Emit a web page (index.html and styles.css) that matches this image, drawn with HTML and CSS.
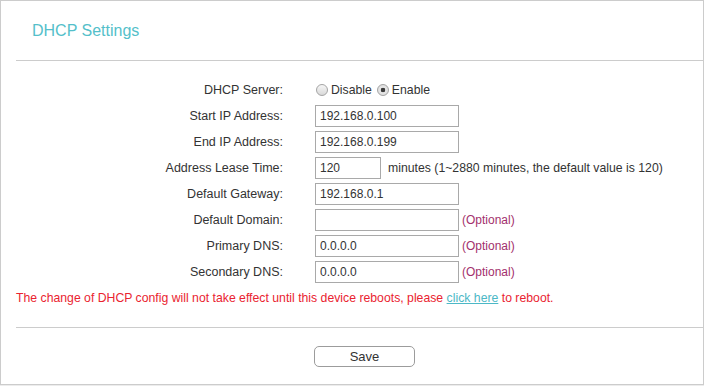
FILE: index.html
```html
<!DOCTYPE html>
<html>
<head>
<meta charset="utf-8">
<title>DHCP Settings</title>
<link rel="stylesheet" href="styles.css">
</head>
<body>
<div class="panel">
  <h2 class="title">DHCP Settings</h2>
  <hr class="rule">
  <div class="form">
    <label class="lbl">DHCP Server:</label>
    <div class="field">
      <label class="radio"><input type="radio" name="dhcp"><span>Disable</span></label>
      <label class="radio"><input type="radio" name="dhcp" checked><span>Enable</span></label>
    </div>
    <label class="lbl">Start IP Address:</label>
    <div class="field"><input class="txt" type="text" value="192.168.0.100"></div>
    <label class="lbl">End IP Address:</label>
    <div class="field"><input class="txt" type="text" value="192.168.0.199"></div>
    <label class="lbl">Address Lease Time:</label>
    <div class="field"><input class="txt short" type="text" value="120"><span class="hint">minutes (1~2880 minutes, the default value is 120)</span></div>
    <label class="lbl">Default Gateway:</label>
    <div class="field"><input class="txt" type="text" value="192.168.0.1"></div>
    <label class="lbl">Default Domain:</label>
    <div class="field"><input class="txt" type="text" value=""><span class="opt">(Optional)</span></div>
    <label class="lbl">Primary DNS:</label>
    <div class="field"><input class="txt" type="text" value="0.0.0.0"><span class="opt">(Optional)</span></div>
    <label class="lbl">Secondary DNS:</label>
    <div class="field"><input class="txt" type="text" value="0.0.0.0"><span class="opt">(Optional)</span></div>
  </div>
  <p class="note">The change of DHCP config will not take effect until this device reboots, please <a href="#" class="link">click here</a> to reboot.</p>
  <hr class="rule rule-bottom">
  <div class="actions"><button class="btn" type="button">Save</button></div>
</div>
</body>
</html>
```
FILE: styles.css
```css
html, body {
  margin: 0;
  padding: 0;
}
body {
  background: #ececec;
  font-family: "Liberation Sans", Arial, sans-serif;
  font-size: 12px;
  color: #333;
}
.panel {
  box-sizing: border-box;
  width: 704px;
  height: 385px;
  background: #fff;
  border: 1px solid #cccccc;
}
.title {
  margin: 0;
  padding: 20px 0 0 31px;
  font-size: 16px;
  line-height: 20px;
  font-weight: normal;
  color: #54bfca;
}
.rule {
  height: 0;
  border: 0;
  border-top: 1px solid #cccccc;
  margin: 19px 0 0 15px;
}
.form {
  display: grid;
  grid-template-columns: 282px auto;
  column-gap: 32px;
  grid-auto-rows: 26px;
  align-items: center;
  margin-top: 16px;
}
.lbl {
  text-align: right;
  font-size: 12.5px;
  line-height: 16px;
  color: #333;
}
.field {
  display: flex;
  align-items: center;
}
.radio {
  display: flex;
  align-items: center;
  margin-right: 4px;
  font-size: 12.25px;
}
.radio input {
  appearance: none;
  -webkit-appearance: none;
  box-sizing: border-box;
  width: 12px;
  height: 12px;
  margin: 0 3px 0 1px;
  border: 1px solid #a4a4a4;
  border-radius: 50%;
  background: linear-gradient(#f6f6f6, #d9d9d9);
}
.radio input:checked {
  background: radial-gradient(circle, #3c3c3c 0, #3c3c3c 2px, #e8e8e8 2.6px, #d6d6d6 100%);
}
.txt {
  box-sizing: border-box;
  width: 144px;
  height: 22px;
  margin: 0;
  padding: 0 4px;
  border: 1px solid #a9a9a9;
  border-radius: 0;
  font-family: "Liberation Sans", Arial, sans-serif;
  font-size: 12px;
  color: #333;
  background: #fff;
  outline: none;
}
.txt.short {
  width: 66px;
}
.hint {
  margin-left: 7px;
  font-size: 12.25px;
}
.opt {
  margin-left: 3px;
  color: #a3306d;
}
.note {
  margin: 5px 0 0 15px;
  font-size: 12.25px;
  line-height: 16px;
  color: #ea2330;
}
.link {
  color: #4cb8c6;
  text-decoration: underline;
}
.rule-bottom {
  margin-top: 21px;
}
.actions {
  display: flex;
  padding: 18px 0 0 313px;
}
.btn {
  box-sizing: border-box;
  width: 101px;
  height: 21px;
  padding: 0;
  border: 1px solid #9c9c9c;
  border-radius: 5px;
  background: #fff;
  font-family: "Liberation Sans", Arial, sans-serif;
  font-size: 13px;
  color: #333;
}
```
